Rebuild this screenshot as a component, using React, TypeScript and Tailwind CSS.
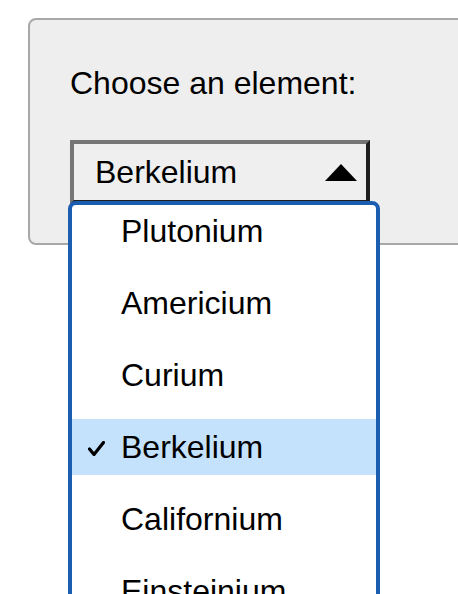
import React from "react";

const elements = ["Plutonium", "Americium", "Curium", "Berkelium", "Californium", "Einsteinium", "Fermium"];
const selected = "Berkelium";

function Check() {
  return (
    <svg width="17" height="15" viewBox="0 0 17 15" className="shrink-0">
      <path d="M1.5 8 L6 13.5 L15.5 1.5" fill="none" stroke="#000" strokeWidth="3.2" strokeLinecap="round" strokeLinejoin="round" />
    </svg>
  );
}

export default function App() {
  return (
    <div
      className="relative w-[458px] h-[594px] overflow-hidden bg-white text-black"
      style={{ fontFamily: '"Liberation Sans", Arial, sans-serif' }}
    >
      {/* Panel */}
      <div className="ml-[28px] mt-[18px] w-[460px] rounded-[8px] border-2 border-[#a8a8a8] bg-[#eeeeee] pl-[40px] pt-[45px] pb-[39px]">
        <label className="block text-[32px] leading-[37px]">Choose an element:</label>

        {/* Select */}
        <div className="mt-[38px] flex h-[64px] w-[300px] items-center justify-between border-4 border-t-[#767676] border-l-[#767676] border-r-[#1f1f1f] border-b-[#1f1f1f] bg-[#efefef] pl-[21px] pr-[9px]">
          <span className="text-[32px] leading-[37px]">Berkelium</span>
          <svg width="32" height="17" viewBox="0 0 32 17">
            <path d="M16 0 L32 17 L0 17 Z" fill="#000" />
          </svg>
        </div>
      </div>

      {/* Open dropdown list */}
      <div className="absolute left-[68px] top-[201px] h-[420px] w-[312px] overflow-hidden rounded-[8px] border-4 border-[#1b5db1] bg-white">
        <ul className="-mt-[2px] flex flex-col gap-4">
          {elements.map((el) => (
            <li
              key={el}
              className={`relative flex h-[56px] items-center pl-[49px] text-[32px] leading-[37px] ${
                el === selected ? "bg-[#c4e2fb]" : ""
              }`}
            >
              {el === selected && (
                <span className="absolute left-[16px] top-[22px]">
                  <Check />
                </span>
              )}
              {el}
            </li>
          ))}
        </ul>
      </div>
    </div>
  );
}
